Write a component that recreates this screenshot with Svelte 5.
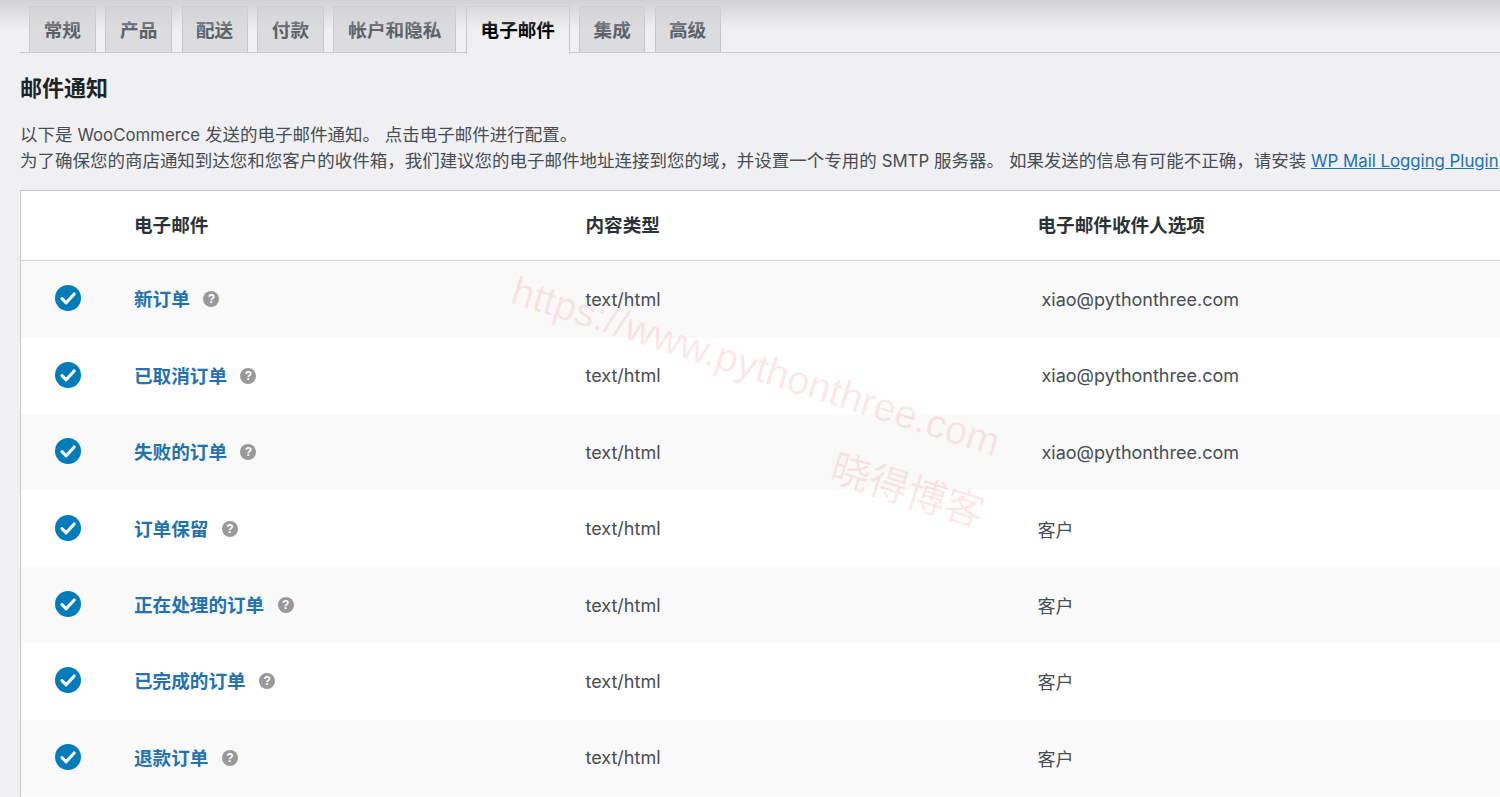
<script>
  const tabs = [
    { label: '常规', w: 67 }, { label: '产品', w: 67 }, { label: '配送', w: 66 }, { label: '付款', w: 67 },
    { label: '帐户和隐私', w: 123 }, { label: '电子邮件', w: 104, active: true }, { label: '集成', w: 66 }, { label: '高级', w: 66 }
  ];
  const rows = [
    ['新订单', 'xiao@pythonthree.com'],
    ['已取消订单', 'xiao@pythonthree.com'],
    ['失败的订单', 'xiao@pythonthree.com'],
    ['订单保留', '客户'],
    ['正在处理的订单', '客户'],
    ['已完成的订单', '客户'],
    ['退款订单', '客户']
  ];
</script>

<div class="page">
  <div class="shade"></div>
  <nav class="tabs">
    {#each tabs as t}
      <a class="tab" class:active={t.active} style="width:{t.w}px">{t.label}</a>
    {/each}
  </nav>
  <h2>邮件通知</h2>
  <p class="intro">以下是 <span class="lat">WooCommerce</span> 发送的电子邮件通知。 点击电子邮件进行配置。<br />为了确保您的商店通知到达您和您客户的收件箱，我们建议您的电子邮件地址连接到您的域，并设置一个专用的 <span class="lat">SMTP</span> 服务器。 如果发送的信息有可能不正确，请安装 <a class="lat" href="#top">WP Mail Logging Plugin</a></p>

  <div class="table">
    <div class="row head">
      <div class="c0"></div>
      <div class="c1">电子邮件</div>
      <div class="c2">内容类型</div>
      <div class="c3">电子邮件收件人选项</div>
    </div>
    {#each rows as r, i}
      <div class="row" class:alt={i % 2 === 0}>
        <div class="c0">
          <svg class="check" viewBox="0 0 26 26" width="26" height="26" aria-hidden="true">
            <circle cx="13" cy="13" r="13" fill="#007cba" />
            <path d="M7 13.6l4.2 4.2L19.2 9" fill="none" stroke="#fff" stroke-width="3.1" stroke-linecap="round" stroke-linejoin="round" />
          </svg>
        </div>
        <div class="c1 name"><a href="#top">{r[0]}</a><span class="help">?</span></div>
        <div class="c2">text/html</div>
        <div class="c3" class:mail={i < 3}>{r[1]}</div>
      </div>
    {/each}
  </div>

  <div class="wm url">https://www.pythonthree.com</div>
  <div class="wm cn">晓得博客</div>
</div>

<style>
  :global(body) {
    margin: 0;
    background: #f0f0f2;
  }
  .page {
    position: relative;
    width: 1500px;
    height: 797px;
    overflow: hidden;
    box-sizing: border-box;
    padding: 6px 0 0 20px;
    font-family: Inter, "Noto Sans CJK SC", sans-serif;
    font-size: 18px;
    color: #474d54;
    background: #f0f0f2;
  }
  .shade {
    position: absolute;
    inset: 0 0 auto 0;
    height: 30px;
    background: linear-gradient(#d2d2d4, rgba(240, 240, 242, 0));
    pointer-events: none;
    z-index: 2;
  }
  .tabs {
    display: flex;
    gap: 9.4px;
    height: 46px;
    padding-left: 8.8px;
    border-bottom: 1.5px solid #c9c9cc;
  }
  .tab {
    box-sizing: border-box;
    height: 46px;
    border: 1.5px solid #c6c7ca;
    border-bottom: 0;
    background: #dcdcde;
    color: #5a6168;
    font-weight: 600;
    font-size: 18.6px;
    line-height: 46px;
    text-align: center;
  }
  .tab.active {
    height: 48px;
    background: #f0f0f2;
    color: #000;
    position: relative;
  }
  h2 {
    margin: 21px 0 0;
    font-size: 22px;
    line-height: 28px;
    font-weight: 700;
    color: #1d2327;
  }
  .intro {
    margin: 20px 0 0;
    font-size: 17.49px;
    line-height: 25px;
    white-space: nowrap;
  }
  .lat {
    font-size: 16.8px;
  }
  .intro a {
    color: #2271b1;
    text-decoration: underline;
  }
  .table {
    margin-top: 16.3px;
    width: 1600px;
    height: 700px;
    border-left: 1.5px solid #c6c7ca;
    border-top: 1.5px solid #c6c7ca;
    background: #fff;
  }
  .row {
    display: flex;
    align-items: center;
    height: 76.4px;
  }
  .row.alt {
    background: #f9f9f9;
  }
  .head {
    box-sizing: content-box;
    height: 65px;
    padding-bottom: 4px;
    border-bottom: 1.5px solid #d2d3d5;
    font-weight: 600;
    color: #2c3338;
    font-size: 18.6px;
  }
  .c0 {
    width: 113px;
    flex: none;
    display: flex;
    justify-content: center;
    box-sizing: border-box;
    padding-right: 19px;
  }
  .check {
    display: block;
    margin-top: -2px;
  }
  .c1 {
    width: 451.5px;
    flex: none;
  }
  .c2 {
    width: 452px;
    flex: none;
    font-size: 18px;
  }
  .c3 {
    flex: none;
    font-size: 18px;
  }
  .head .c2,
  .head .c3 {
    font-size: 18.6px;
  }
  .c3.mail {
    padding-left: 4px;
  }
  .name {
    display: flex;
    align-items: center;
  }
  .name a {
    color: #2271b1;
    font-weight: 600;
    font-size: 18.6px;
    margin-top: -3px;
    text-decoration: none;
  }
  .help {
    width: 16px;
    height: 16px;
    margin-left: 13.5px;
    border-radius: 50%;
    background: #999;
    color: #fff;
    font: 700 12px/16px "Liberation Sans", sans-serif;
    text-align: center;
  }
  .wm {
    position: absolute;
    color: rgba(240, 60, 80, 0.12);
    white-space: nowrap;
    pointer-events: none;
    transform-origin: 0 0;
    transform: rotate(17.6deg);
    font-family: "Liberation Sans", "Noto Sans CJK SC", sans-serif;
    z-index: 3;
  }
  .url {
    left: 520px;
    top: 268px;
    font-size: 39.7px;
  }
  .cn {
    left: 842px;
    top: 436px;
    font-size: 39.5px;
  }
</style>
